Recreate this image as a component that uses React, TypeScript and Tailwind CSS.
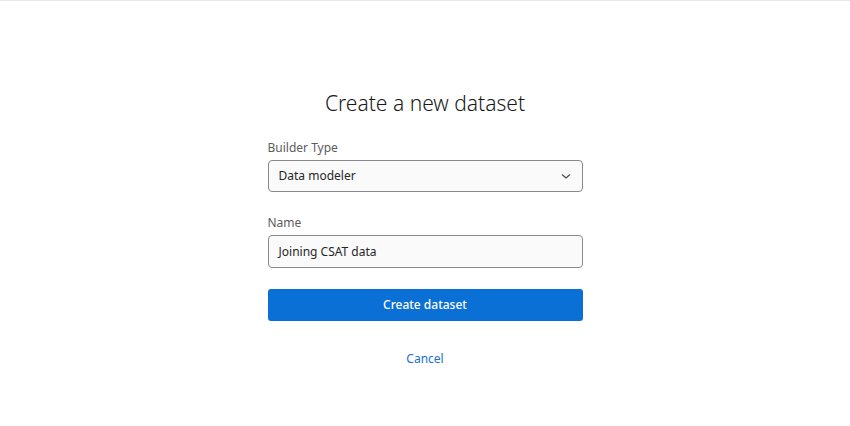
import React from 'react';

const App: React.FC = () => {
  return (
    <div
      className="w-[850px] h-[426px] bg-white border-t border-[#e8e8e8] flex justify-center"
      style={{ fontFamily: '"Noto Sans", "Open Sans", sans-serif' }}
    >
      <div className="w-[315px] flex flex-col pt-[88px]">
        <h1 className="text-center text-[21px] font-light text-[#1a1a1a] leading-[28px]">
          Create a new dataset
        </h1>

        <label className="mt-[23px] text-[12px] text-[#5c5c5c] leading-[16px]">Builder Type</label>
        <button className="mt-[4px] h-[32px] flex items-center justify-between px-[10px] bg-[#fafafa] border border-[#8a8a8a] rounded-[4px] text-[12px] text-[#262626]">
          <span>Data modeler</span>
          <svg width="12" height="12" viewBox="0 0 12 12" fill="none" stroke="#4a4a4a" strokeWidth="1.2">
            <path d="M2 4.5 L6 8 L10 4.5" />
          </svg>
        </button>

        <label className="mt-[23px] text-[12px] text-[#5c5c5c] leading-[16px]">Name</label>
        <div className="mt-[4px] h-[33px] flex items-center px-[10px] bg-[#fafafa] border border-[#8a8a8a] rounded-[4px] text-[12px] text-[#262626]">
          Joining CSAT data
        </div>

        <button className="mt-[21px] h-[32px] rounded-[3px] bg-[#0b70d5] text-white text-[12px] font-medium">
          Create dataset
        </button>

        <button className="mt-[29px] mx-auto text-[12px] text-[#1a6fcf]">Cancel</button>
      </div>
    </div>
  );
};

export default App;
